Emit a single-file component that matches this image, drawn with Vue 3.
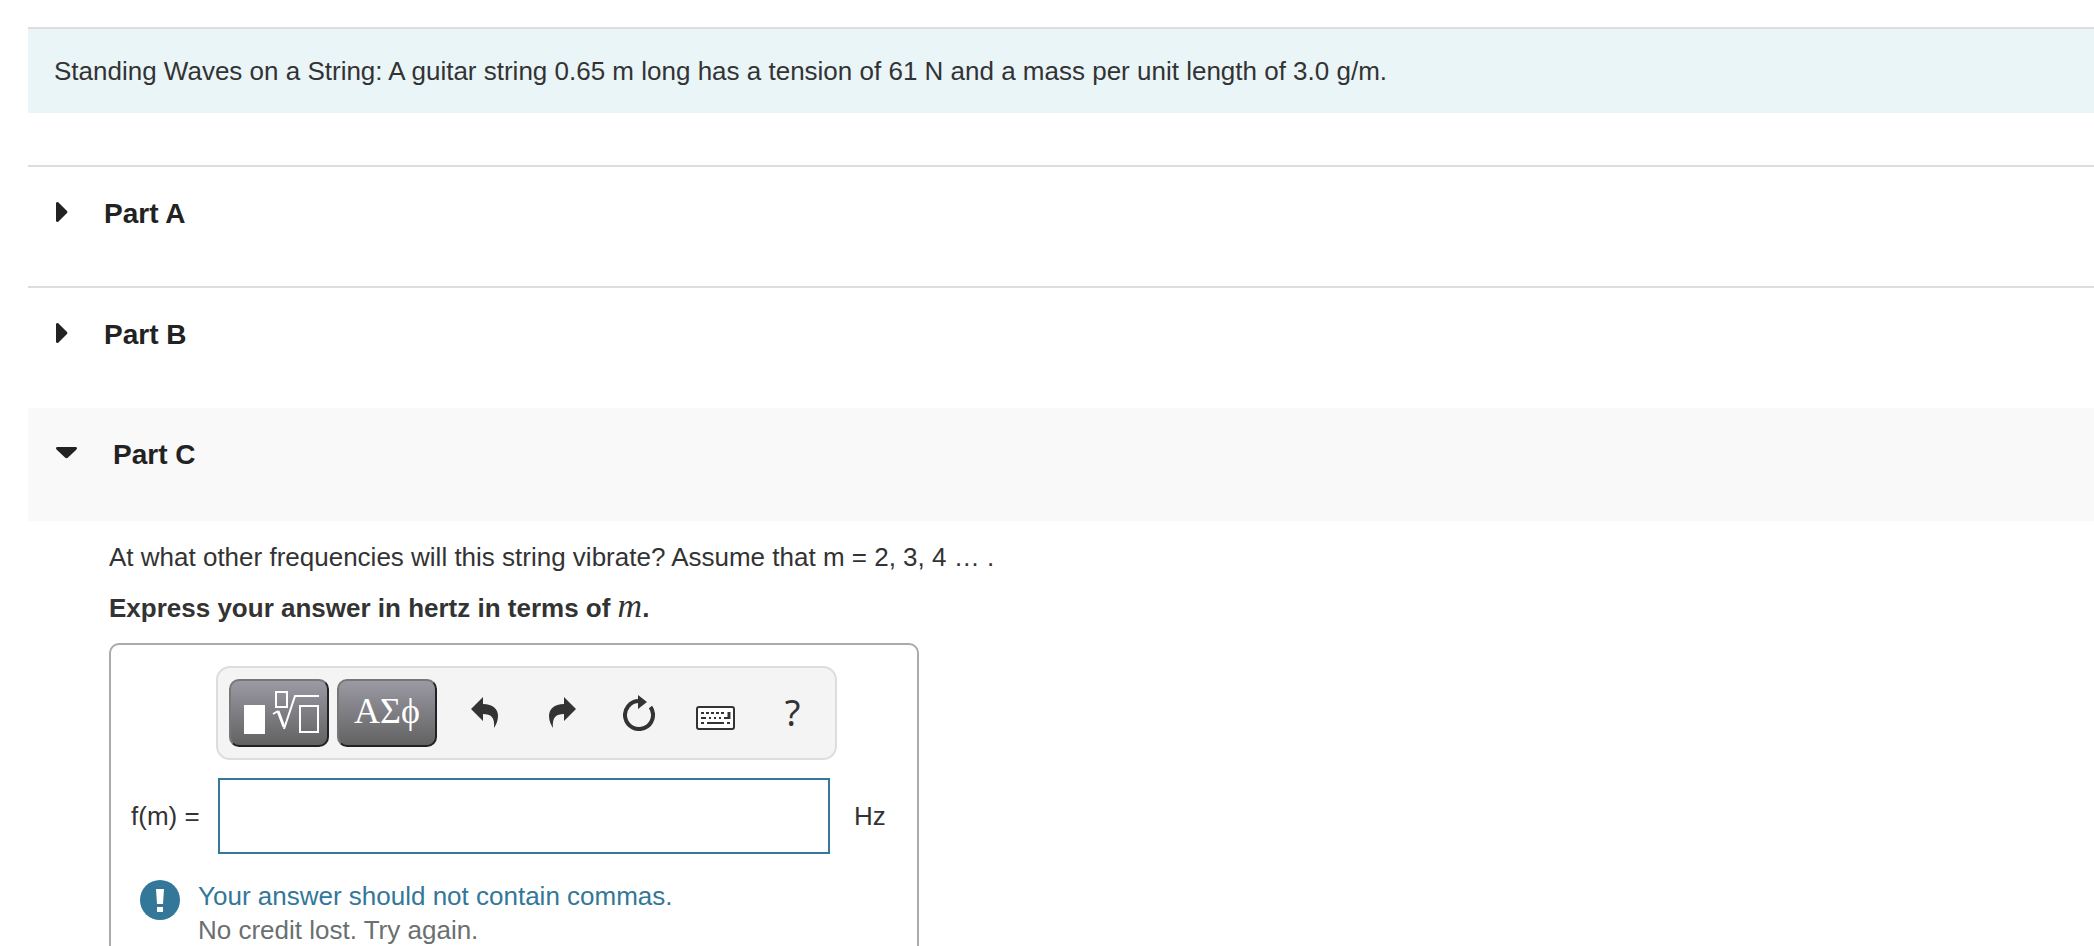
<script setup>
import { ref } from 'vue'

const answer = ref('')
const collapsedParts = ['Part A', 'Part B']
</script>

<template>
  <main class="page">
    <p class="intro">
      Standing Waves on a String: A guitar string 0.65 m long has a tension of 61 N and a mass per unit length of 3.0 g/m.
    </p>

    <section v-for="part in collapsedParts" :key="part" class="part">
      <h2>
        <button type="button" class="part-toggle" aria-expanded="false">
          <svg width="12" height="20" viewBox="0 0 12 20" aria-hidden="true">
            <path d="M0 1Q0 0 2 0L11 9Q12 10 11 11L2 20Q0 20 0 19Z" fill="#222" />
          </svg>
          {{ part }}
        </button>
      </h2>
    </section>

    <section>
      <h2 class="part-open">
        <button type="button" class="part-toggle" aria-expanded="true">
          <svg width="21" height="20" viewBox="0 0 21 20" aria-hidden="true">
            <path d="M1 4H20Q22 5 20 7L12 14.500Q10.500 16 9 14.500L1 7Q-1 5 1 4Z" fill="#222" />
          </svg>
          Part C
        </button>
      </h2>

      <div class="question">
        <p>At what other frequencies will this string vibrate? Assume that m = 2, 3, 4 … .</p>
        <p class="instruction">Express your answer in hertz in terms of <i>m</i>.</p>

        <form class="answer" @submit.prevent>
          <div class="toolbar" role="toolbar">
            <button type="button" class="palette" aria-label="Templates">
              <svg width="96" height="64" viewBox="0 0 96 64" fill="none" stroke="#fff" aria-hidden="true">
                <rect x="13" y="24" width="21" height="29" fill="#fff" stroke="none" />
                <rect x="45" y="11" width="11" height="15" stroke-width="2" />
                <path d="M42 33L47 30" stroke-width="2" />
                <path d="M47 30L53 46" stroke-width="3" />
                <path d="M53 48L64 15H88" stroke-width="2" />
                <rect x="69" y="25" width="18" height="26" stroke-width="2" />
              </svg>
            </button>
            <button type="button" class="palette symbols">ΑΣϕ</button>
            <div class="actions">
              <button type="button" aria-label="Undo">
                <svg width="28" height="36" viewBox="0 0 28 36" aria-hidden="true">
                  <path d="M0 14L12 2V9C22 9 27 14 27 21C27 26 25 30 23 33C24 22 20 19 12 19V26Z" fill="#333" />
                </svg>
              </button>
              <button type="button" aria-label="Redo">
                <svg width="28" height="36" viewBox="0 0 28 36" aria-hidden="true">
                  <path d="M28 14L16 2V9C6 9 1 14 1 21C1 26 3 30 5 33C4 22 8 19 16 19V26Z" fill="#333" />
                </svg>
              </button>
              <button type="button" aria-label="Reset">
                <svg width="32" height="36" viewBox="0 0 32 36" aria-hidden="true">
                  <path d="M27.500 12A14 14 0 1 1 16 6" fill="none" stroke="#333" stroke-width="4" />
                  <path d="M15 0L24 7L15 14Z" fill="#333" />
                </svg>
              </button>
              <button type="button" aria-label="Keyboard shortcuts">
                <svg width="39" height="36" viewBox="0 0 39 36" aria-hidden="true">
                  <rect x="1" y="12" width="37" height="22" rx="2" fill="#fff" stroke="#333" stroke-width="2" />
                  <path d="M5 18H29" stroke="#333" stroke-width="2" stroke-dasharray="3 2" />
                  <path d="M5 23H10M13 23H15M18 23H20M23 23H25M28 23H34M5 28H8M11 28H28M31 28H34" stroke="#333" stroke-width="2" />
                  <path d="M33 17V24" stroke="#333" stroke-width="3" />
                </svg>
              </button>
              <button type="button" class="help" aria-label="Help">?</button>
            </div>
          </div>

          <div class="entry">
            <label for="frequency">f(m) =</label>
            <input id="frequency" v-model="answer" type="text" autocomplete="off" />
            <span>Hz</span>
          </div>

          <div class="feedback" role="status">
            <svg width="40" height="40" viewBox="0 0 40 40" aria-hidden="true">
              <circle cx="20" cy="20" r="20" fill="#337799" />
              <path d="M16 9H24L23 24H17ZM17 27H23V32H17Z" fill="#fff" />
            </svg>
            <div>
              <p class="warning">Your answer should not contain commas.</p>
              <p class="credit">No credit lost. Try again.</p>
            </div>
          </div>
        </form>
      </div>
    </section>
  </main>
</template>

<style>
body {
  background: #fff;
}
</style>

<style scoped>
.page {
  box-sizing: border-box;
  height: 100vh;
  overflow: hidden;
  padding: 27px 0 0 28px;
  font: 26px/34px "Liberation Sans", Arial, sans-serif;
  color: #333;
}

p,
h2 {
  margin: 0;
}

button {
  padding: 0;
  border: 0;
  background: none;
  color: inherit;
  font: inherit;
  cursor: pointer;
}

svg {
  display: block;
  flex: none;
}

.intro {
  margin-bottom: 52px;
  padding: 25px 26px;
  border-top: 2px solid #ddd;
  background: #eaf5f8;
}

.part {
  padding: 30px 0 55px 28px;
  border-top: 2px solid #ddd;
}

.part-toggle {
  display: flex;
  align-items: center;
  gap: 36px;
  color: #222;
  font: bold 28px/34px "Liberation Sans", Arial, sans-serif;
}

.part-toggle svg {
  margin-bottom: 4px;
}

.part-open {
  margin-top: 1px;
  padding: 30px 0 49px 28px;
  background: #f9f9f9;
}

.question {
  padding: 19px 40px 0 81px;
}

.instruction {
  margin: 16px 0 18px;
  font-weight: bold;
}

.instruction i {
  font: italic 34px/32px "Liberation Serif", "Times New Roman", serif;
}

.answer {
  box-sizing: border-box;
  max-width: 810px;
  padding: 21px 24px 40px 20px;
  border: 2px solid #aaa;
  border-radius: 10px;
}

.toolbar {
  display: flex;
  gap: 8px;
  width: fit-content;
  margin-left: 85px;
  padding: 11px 4px 11px 11px;
  border: 2px solid #ddd;
  border-radius: 14px;
  background: #f4f4f4;
}

.palette {
  box-sizing: border-box;
  width: 100px;
  height: 68px;
  border: 2px solid;
  border-color: #777 #222 #222 #777;
  border-radius: 10px;
  background: linear-gradient(#9b99a3, #626262);
  color: #fff;
}

.symbols {
  padding-bottom: 4px;
  font: 36px/60px "Liberation Serif", "Times New Roman", serif;
}

.actions {
  display: flex;
  padding-left: 1px;
}

.actions button {
  display: flex;
  align-items: center;
  justify-content: center;
  width: 77px;
}

.actions .help {
  font: 36px/60px "Noto Sans", sans-serif;
}

.entry {
  display: grid;
  grid-template-columns: 87px 1fr 63px;
  align-items: center;
  margin-top: 18px;
}

.entry input {
  box-sizing: border-box;
  width: 100%;
  height: 76px;
  margin: 0;
  padding: 0 12px;
  border: 2px solid #337799;
  border-radius: 0;
  outline: 0;
  background: #fff;
  color: inherit;
  font: inherit;
}

.entry span {
  padding-left: 24px;
}

.feedback {
  display: flex;
  gap: 18px;
  margin-top: 25px;
  padding-left: 9px;
}

.feedback svg {
  margin-top: 1px;
}

.warning {
  color: #337799;
}

.credit {
  color: #6a7070;
}
</style>
